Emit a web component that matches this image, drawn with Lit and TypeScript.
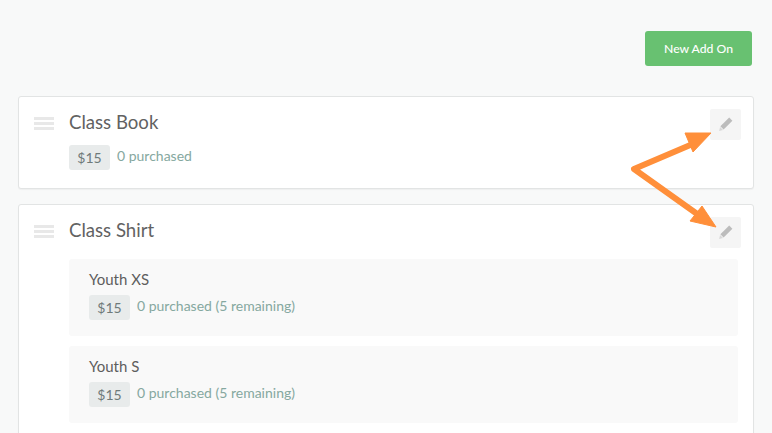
import { LitElement, html, css } from "lit";
import { customElement } from "lit/decorators.js";

const pencil = html`<svg class="pen" width="16" height="16" viewBox="0 0 16 16"><path d="M11.2 1.6 14.4 4.8 5.6 13.4 2.4 10.2Z" fill="#bcbcbc"/><path d="M2 11 5 14 1.2 14.9Z" fill="#d8d8d8"/></svg>`;

@customElement("app-root")
export class AppRoot extends LitElement {
  static styles = css`
    :host { display: block; position: relative; height: 433px; overflow: hidden; background: #f8f9f9; font-family: Lato, "Liberation Sans", sans-serif; color: #555; }
    .page { padding: 31px 20px 0 18px; display: flex; flex-direction: column; }
    .top { display: flex; justify-content: flex-end; margin-bottom: 30px; }
    .new { width: 107px; height: 35px; background: #68c171; color: #fff; border-radius: 3px; font-size: 12.2px; font-weight: 500; display: flex; align-items: center; justify-content: center; }
    .card { width: 736px; margin-right: -2px; box-sizing: border-box; background: #fff; border: 1px solid #e2e4e4; border-radius: 3px; box-shadow: 0 1px 1px rgba(0,0,0,.04); padding: 12px 12px 18px 14px; margin-bottom: 15px; display: grid; grid-template-columns: 36px 1fr; }
    .handle { display: flex; flex-direction: column; gap: 2px; width: 20px; padding: 8px 0 0 1px; }
    .handle i { display: block; height: 3px; background: #e8e8e8; }
    .head { display: flex; justify-content: space-between; align-items: flex-start; height: 31px; }
    .title { font-size: 18.6px; line-height: 26px; color: #626262; }
    .edit { width: 31px; height: 31px; background: #f5f5f5; border-radius: 2px; display: flex; align-items: center; justify-content: center; }
    .pen { margin-bottom: 2px; }
    .meta { display: flex; align-items: center; gap: 7px; font-size: 14px; line-height: 22px; color: #85a8a0; }
    .head + .meta { margin-top: 5px; }
    .meta span:last-child { margin-top: -4px; }
    .price { width: 41px; height: 25px; background: #e8ebeb; border-radius: 3px; color: #6f7a7a; display: flex; align-items: center; justify-content: center; font-size: 14px; }
    .sub { margin: 11px 3px 0 0; display: flex; flex-direction: column; gap: 10px; }
    .row { height: 77px; box-sizing: border-box; background: #f9f9f9; border-radius: 3px; padding: 9px 20px; }
    .name { font-size: 15px; line-height: 22px; color: #5e5e5e; margin-bottom: 5px; }
    .arrows { position: absolute; left: 0; top: 0; pointer-events: none; }
  `;

  private row(name: string) {
    return html`<div class="row"><div class="name">${name}</div><div class="meta"><span class="price">$15</span><span>0 purchased (5 remaining)</span></div></div>`;
  }

  private handle() {
    return html`<div class="handle"><i></i><i></i><i></i></div>`;
  }

  render() {
    return html`
      <div class="page">
        <div class="top"><div class="new">New Add On</div></div>
        <div class="card">
          ${this.handle()}
          <div>
            <div class="head"><span class="title">Class Book</span><span class="edit">${pencil}</span></div>
            <div class="meta"><span class="price">$15</span><span>0 purchased</span></div>
          </div>
        </div>
        <div class="card">
          ${this.handle()}
          <div>
            <div class="head"><span class="title">Class Shirt</span><span class="edit">${pencil}</span></div>
            <div class="sub">${this.row("Youth XS")}${this.row("Youth S")}</div>
          </div>
        </div>
      </div>
      <svg class="arrows" width="772" height="433" viewBox="0 0 772 433">
        <path d="M695 143 634 169 700 216" fill="none" stroke="#ff8f3a" stroke-width="6" stroke-linejoin="round"/>
        <path d="M685 133 711 133 693 152Z M702 206 716 227 690 221Z" fill="#ff8f3a" stroke="#ff8f3a" stroke-linejoin="round"/>
      </svg>
    `;
  }
}
